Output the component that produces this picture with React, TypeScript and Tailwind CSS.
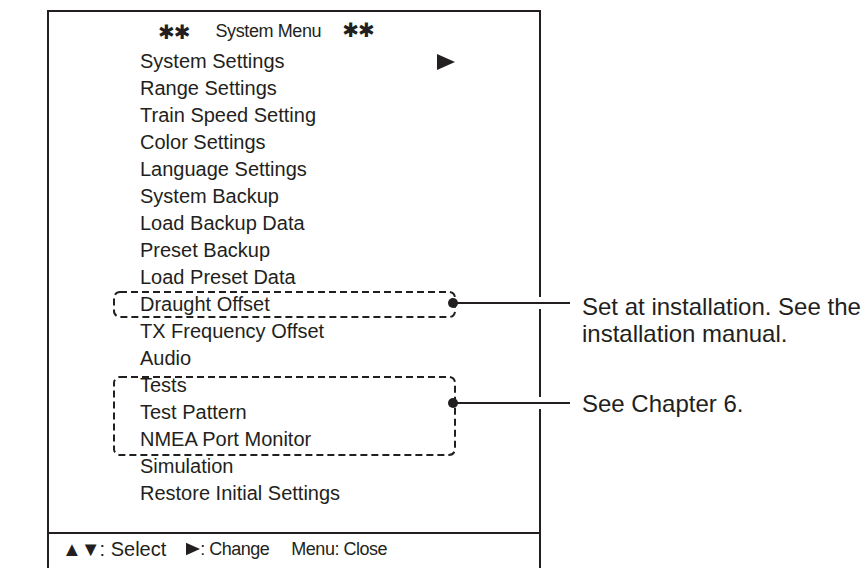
const items = [
  'System Settings',
  'Range Settings',
  'Train Speed Setting',
  'Color Settings',
  'Language Settings',
  'System Backup',
  'Load Backup Data',
  'Preset Backup',
  'Load Preset Data',
  'Draught Offset',
  'TX Frequency Offset',
  'Audio',
  'Tests',
  'Test Pattern',
  'NMEA Port Monitor',
  'Simulation',
  'Restore Initial Settings',
]

function Play({ className }: { className?: string }) {
  return (
    <svg className={className} viewBox="0 0 18 16" fill="#231f20">
      <path d="M0 0 L18 8 L0 16 Z" />
    </svg>
  )
}

function Stars() {
  return (
    <span className="font-['DejaVu_Sans',sans-serif] text-[20px] leading-none tracking-[-1px]">✱✱</span>
  )
}

export default function App() {
  return (
    <div className="relative w-[863px] h-[568px] overflow-hidden bg-white text-[#231f20] font-['Liberation_Sans',Arial,sans-serif]">
      <div className="ml-[47px] mt-[10px] w-[494px] h-[600px] border-2 border-b-0 border-[#231f20]">
        <div className="h-[520px] flex flex-col">
          <div className="pt-[6px] pl-[109px] leading-[27px] flex items-center">
            <Stars />
            <span className="ml-[26px] text-[18px] tracking-[-0.4px]">System Menu</span>
            <span className="ml-[21px]"><Stars /></span>
          </div>
          <ul className="mt-[3px] pl-[91px] pr-[84px] text-[20px] leading-[27px]">
            {items.map((it, i) => (
              <li key={it} className="flex items-center">
                <span>{it}</span>
                {i === 0 && <Play className="ml-auto w-[18px] h-[16px]" />}
              </li>
            ))}
          </ul>
        </div>
        <div className="border-t-2 border-[#231f20] h-[32px] pl-[13px] flex items-center text-[20px]">
          <span className="tracking-[-1px]">▲▼</span>
          <span>: Select</span>
          <Play className="ml-[20px] w-[14px] h-[14px]" />
          <span className="text-[18px] tracking-[-0.5px]">: Change</span>
          <span className="ml-[22px] text-[18px] tracking-[-0.5px]">Menu: Close</span>
        </div>
      </div>

      <svg className="absolute left-0 top-0" width="863" height="568">
        <g fill="none" stroke="#231f20" strokeWidth="2" strokeDasharray="7 4">
          <rect x="114" y="292" width="341" height="25" rx="6" />
          <rect x="114" y="377" width="341" height="78" rx="6" />
        </g>
        <rect x="536" y="297" width="8" height="12" fill="white" />
        <rect x="536" y="397" width="8" height="12" fill="white" />
        <g stroke="#231f20" strokeWidth="2">
          <line x1="453" y1="303" x2="570" y2="303" />
          <line x1="453" y1="403" x2="570" y2="403" />
        </g>
        <circle cx="453" cy="303" r="5" fill="#231f20" />
        <circle cx="453" cy="403" r="5" fill="#231f20" />
      </svg>

      <div className="absolute left-[582px] top-[293px] text-[24px] leading-[27px] text-[#231f20]">
        Set at installation. See the
        <br />
        installation manual.
      </div>
      <div className="absolute left-[582px] top-[390px] text-[24px] leading-[27px] text-[#231f20]">
        See Chapter 6.
      </div>
    </div>
  )
}
